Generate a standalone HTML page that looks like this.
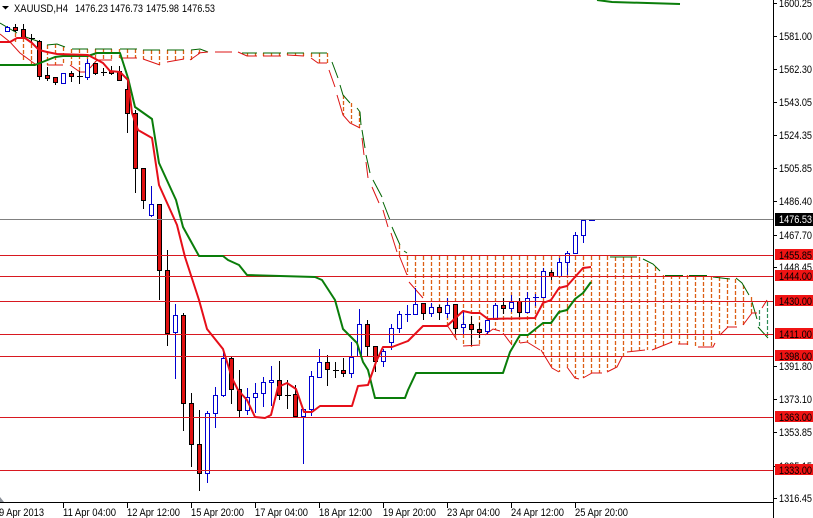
<!DOCTYPE html>
<html><head><meta charset="utf-8"><title>XAUUSD,H4</title>
<style>
html,body{margin:0;padding:0;background:#fff;width:813px;height:518px;overflow:hidden}
svg{display:block}
text{font-family:"Liberation Sans",sans-serif;font-size:11px;fill:#000}
</style></head><body>
<svg width="813" height="518" viewBox="0 0 813 518" xmlns="http://www.w3.org/2000/svg">
<rect width="813" height="518" fill="#fff"/>
<!-- cloud hatch -->
<path fill="none" stroke="#dc5f14" stroke-width="1.3" stroke-dasharray="4 2" d="M15.5 33V42M23.5 38V62M31.5 38V64M39.5 42V63M47.5 45V65M55.5 44V65M63.5 47V65M71.5 49V65M79.5 49V71M87.5 49V70M95.5 49V62M103.5 49V60M111.5 49V60M119.5 49V58M127.5 49V58M135.5 49V58M143.5 50V59M151.5 50V61M159.5 50V65M167.5 50V62M175.5 50V60M183.5 50V59M191.5 50V60M199.5 50V53M247.5 53V56M255.5 53V56M263.5 53V56M271.5 53V56M279.5 53V56M287.5 53V55M295.5 53V56M303.5 53V56M311.5 53V58M319.5 53V63M327.5 53V63M343.5 95V115M351.5 103V123M359.5 112V128M399.5 245V255M407.5 256V275M415.5 256V287M423.5 256V298M431.5 256V307M439.5 256V316M447.5 256V325M455.5 256V338M463.5 256V346M471.5 256V347M479.5 256V346M487.5 256V332M495.5 256V330M503.5 256V334M511.5 256V345M519.5 256V343M527.5 256V342M535.5 256V346M543.5 256V354M551.5 256V367M559.5 256V372M567.5 256V367M575.5 256V378M583.5 256V378M591.5 256V373M599.5 256V373M607.5 256V371M615.5 257V368M623.5 257V357M631.5 257V352M639.5 257V350M647.5 263V350M655.5 267V350M663.5 275V347M671.5 275V343M679.5 275V344M687.5 275V345M695.5 276V347M703.5 276V347M711.5 276V347M719.5 277V335M727.5 278V327M735.5 279V327M743.5 285V325M751.5 297V313"/>
<path fill="none" stroke="#2e8b57" stroke-width="1.2" stroke-dasharray="4 2" d="M759.5 310V327M767.5 302V338"/>
<!-- cloud contours -->
<path fill="none" stroke="#006400" stroke-width="1" d="M0 23L17 33M23 36L40 42M47 45L57 44L65 47M72 49H88M95 49H112M120 49H137M143 50H160M167 50H184M191 50L200 49L208 52M215 52H232M242 53H257M263 53H281M287 53H304M311 53H327M332 62L338 78M340 85L343 95L350 103M357 108L360 112L361 125M362 130L365 148M366 155L370 173M373 180L382 197M383 202L390 220M392 227L400 245M404 251L407 253M610 257H637M643 259L653 264L660 271M665 275.5H683M689 275.5H707M713 277L730 279M736 278L742 283L749 295M752 302L757 319M758 327L768 338"/>
<path fill="none" stroke="#dc1414" stroke-width="1" d="M0 34L10 42L20 53L35 64H40M47 65H63M70 65L80 72L87 72M90 68L97 60H112M120 58H137M143 59L160 65M167 62L184 59M190 60L200 53M198 53L208 52M215 52H232M238 52L247 56H257M263 56H281M287 55L304 56M311 58L318 63H327M329 70L335 87M337 95L343 115L350 123L360 128M362 138L364 155M366 162L368 178M372 187L379 203M383 210L388 227M391 233L397 252M399 255L407 275M409 282L423 298M447 325L457 340M463 346L480 345M485 335L493 329L500 331M503 333L512 345M520 343L527 342L540 350M541 350L552 368L559 372M567 367L575 378L579 379M583 378L592 373L602 373M607 372L617 367L622 357M627 352L645 350M652 350L672 342M678 344H688M698 347H713L715 343M720 335L728 327H737M743 325L752 313H757M762 308L767 300"/>
<!-- candle wicks -->
<path fill="none" stroke="#000" stroke-width="1" d="M15.5 24V32M23.5 24V39M39.5 40V80M47.5 67V81M55.5 77V85M71.5 71V82M95.5 63V75M111.5 66V75M119.5 66V80M127.5 80V133M135.5 110V193M143.5 168V209M159.5 204V300M167.5 250V346M183.5 313V431M191.5 393V467M199.5 410V491M231.5 357V404M239.5 370V418M279.5 361V400M295.5 385V416M327.5 355V386M343.5 358V377M367.5 320V357M375.5 346V372M423.5 303V320M439.5 305V320M455.5 304V334M471.5 316V345M479.5 323V338M503.5 298V314M519.5 298V317M551.5 270V280M31.5 34V43M29 38.5H35M79.5 71V84M77 76.5H83M103.5 68V76M101 72.5H107M287.5 380V409M285 395.5H291M335.5 362V378M333 370.5H339"/>
<path fill="none" stroke="#0000d0" stroke-width="1" d="M7.5 26V32M63.5 73V83M87.5 59V80M151.5 186V217M175.5 304V379M207.5 411V483M215.5 387V428M223.5 349V397M247.5 388V415M255.5 383V413M263.5 377V407M271.5 366V406M303.5 409V464M311.5 371V416M319.5 349V378M351.5 342V378M359.5 309V356M383.5 349V367M391.5 324V350M399.5 311V333M415.5 288V314M431.5 303V317M447.5 298V318M463.5 312V334M487.5 320V334M495.5 303V320M511.5 295V312M527.5 292V313M543.5 268V297M559.5 258V276M567.5 251V275M575.5 232V253M583.5 219V243M407.5 305V322M405 314.5H411M535.5 294V306M533 297.5H539M589 220.5H595"/>
<!-- bear bodies -->
<path fill="#e01010" stroke="#000" stroke-width="1" d="M13.5 27.5h4v3h-4zM21.5 29.5h4v9h-4zM37.5 41.5h4v35h-4zM45.5 75.5h4v3h-4zM53.5 77.5h4v5h-4zM69.5 73.5h4v3h-4zM93.5 63.5h4v10h-4zM109.5 71.5h4v2h-4zM117.5 71.5h4v9h-4zM125.5 89.5h4v24h-4zM133.5 113.5h4v55h-4zM141.5 168.5h4v32h-4zM157.5 204.5h4v66h-4zM165.5 270.5h4v63h-4zM181.5 315.5h4v88h-4zM189.5 403.5h4v41h-4zM197.5 444.5h4v29h-4zM229.5 358.5h4v31h-4zM237.5 389.5h4v21h-4zM277.5 380.5h4v15h-4zM293.5 394.5h4v22h-4zM325.5 362.5h4v7h-4zM341.5 370.5h4v3h-4zM365.5 324.5h4v22h-4zM373.5 346.5h4v15h-4zM421.5 303.5h4v10h-4zM437.5 307.5h4v5h-4zM453.5 304.5h4v24h-4zM469.5 324.5h4v5h-4zM477.5 329.5h4v3h-4zM501.5 305.5h4v3h-4zM517.5 301.5h4v11h-4zM549.5 272.5h4v4h-4z"/>
<!-- bull bodies -->
<path fill="#fff" stroke="#0000d0" stroke-width="1" d="M5.5 27.5h4v4h-4zM61.5 73.5h4v10h-4zM85.5 63.5h4v14h-4zM149.5 204.5h4v11h-4zM173.5 315.5h4v17h-4zM205.5 413.5h4v60h-4zM213.5 395.5h4v18h-4zM221.5 358.5h4v37h-4zM245.5 397.5h4v13h-4zM253.5 393.5h4v4h-4zM261.5 382.5h4v11h-4zM269.5 380.5h4v2h-4zM301.5 409.5h4v7h-4zM309.5 376.5h4v33h-4zM317.5 362.5h4v15h-4zM349.5 357.5h4v16h-4zM357.5 324.5h4v32h-4zM381.5 351.5h4v10h-4zM389.5 328.5h4v14h-4zM397.5 314.5h4v14h-4zM413.5 304.5h4v10h-4zM429.5 307.5h4v6h-4zM445.5 305.5h4v8h-4zM461.5 324.5h4v3h-4zM485.5 320.5h4v11h-4zM493.5 305.5h4v14h-4zM509.5 302.5h4v6h-4zM525.5 298.5h4v14h-4zM541.5 271.5h4v26h-4zM557.5 262.5h4v14h-4zM565.5 253.5h4v9h-4zM573.5 235.5h4v18h-4zM581.5 220.5h4v15h-4z"/>
<!-- horizontal levels -->
<path fill="none" stroke="#808080" stroke-width="1" d="M0 219.5H773"/>
<path fill="none" stroke="#d81820" stroke-width="1" d="M0 255.5H773M0 276.5H773M0 301.5H773M0 334.5H773M0 356.5H773M0 417.5H773M0 470.5H773"/>
<!-- Kijun -->
<path fill="none" stroke="#0a7d0a" stroke-width="2" stroke-linejoin="round" d="M0 65L35 65L55 57L63 56L88 56L97 53L120 53L128 78L135 107L152 119L159 163L176 200L183 227L199 256L223 256L228 260L239 265L247 275L315 277L322 280L335 300L343 329L357 343L363 362L368 370L375 398L405 398L408 390L416 373L503 373L510 352L520 335L528 335L543 323L551 323L559 312L567 310L575 299L583 293L591 282"/>
<path fill="none" stroke="#0a7d0a" stroke-width="2" d="M597 0L612 2L680 4"/>
<!-- Tenkan -->
<path fill="none" stroke="#e60f19" stroke-width="2" stroke-linejoin="round" d="M0 42L10 42L17 38L25 38L32 43L39 50L47 52L57 54L88 55L103 63L110 71L120 72L128 80L132 113L138 130L152 138L159 185L177 225L185 257L199 300L207 329L223 349L232 378L238 390L247 400L255 417L265 418L271 415L278 387L287 383L296 389L304 412L312 412L320 406L352 406L358 386L368 385L376 362L383 347L392 347L408 341L423 326L447 326L463 311L472 313L480 313L488 319L535 318L543 303L551 300L559 288L567 286L583 268L591 267"/>
<!-- axes -->
<path fill="none" stroke="#000" stroke-width="1" d="M773.5 0V518M0 502.5H774M63.5 503V508M127.5 503V508M191.5 503V508M255.5 503V508M319.5 503V508M383.5 503V508M447.5 503V508M511.5 503V508M575.5 503V508M773 3.5H777M773 36.5H777M773 69.5H777M773 102.5H777M773 135.5H777M773 168.5H777M773 201.5H777M773 235.5H777M773 267.5H777M773 366.5H777M773 399.5H777M773 432.5H777M773 466.5H777M773 498.5H777"/>
<polygon points="0,497 4,502 0,502" fill="#8a8f98"/>
<!-- header -->
<polygon points="2,6 9,6 5.5,9.5" fill="#000"/>
<text x="14" y="12" textLength="54" lengthAdjust="spacingAndGlyphs">XAUUSD,H4</text>
<text x="75" y="12" textLength="33" lengthAdjust="spacingAndGlyphs">1476.23</text>
<text x="110" y="12" textLength="33" lengthAdjust="spacingAndGlyphs">1476.73</text>
<text x="146" y="12" textLength="33" lengthAdjust="spacingAndGlyphs">1475.98</text>
<text x="182" y="12" textLength="33" lengthAdjust="spacingAndGlyphs">1476.53</text>
<!-- price labels -->
<g>
<rect x="775" y="213" width="38" height="13" fill="#000"/>
<text x="779" y="7" textLength="33" lengthAdjust="spacingAndGlyphs">1600.25</text>
<text x="779" y="40" textLength="33" lengthAdjust="spacingAndGlyphs">1581.00</text>
<text x="779" y="73" textLength="33" lengthAdjust="spacingAndGlyphs">1562.30</text>
<text x="779" y="106" textLength="33" lengthAdjust="spacingAndGlyphs">1543.05</text>
<text x="779" y="139" textLength="33" lengthAdjust="spacingAndGlyphs">1524.35</text>
<text x="779" y="172" textLength="33" lengthAdjust="spacingAndGlyphs">1505.85</text>
<text x="779" y="205" textLength="33" lengthAdjust="spacingAndGlyphs">1486.40</text>
<text x="779" y="223" textLength="33" lengthAdjust="spacingAndGlyphs" style="fill:#fff">1476.53</text>
<text x="779" y="239" textLength="33" lengthAdjust="spacingAndGlyphs">1467.70</text>
<text x="779" y="271" textLength="33" lengthAdjust="spacingAndGlyphs">1448.45</text>
<rect x="775" y="249" width="38" height="11" fill="#f01414"/>
<text x="779" y="259" textLength="33" lengthAdjust="spacingAndGlyphs">1455.85</text>
<rect x="775" y="270" width="38" height="11" fill="#f01414"/>
<text x="779" y="280" textLength="33" lengthAdjust="spacingAndGlyphs">1444.00</text>
<rect x="775" y="295" width="38" height="11" fill="#f01414"/>
<text x="779" y="305" textLength="33" lengthAdjust="spacingAndGlyphs">1430.00</text>
<rect x="775" y="328" width="38" height="11" fill="#f01414"/>
<text x="779" y="338" textLength="33" lengthAdjust="spacingAndGlyphs">1411.00</text>
<rect x="775" y="350" width="38" height="11" fill="#f01414"/>
<text x="779" y="360" textLength="33" lengthAdjust="spacingAndGlyphs">1398.00</text>
<text x="779" y="370" textLength="33" lengthAdjust="spacingAndGlyphs">1391.80</text>
<text x="779" y="403" textLength="33" lengthAdjust="spacingAndGlyphs">1373.10</text>
<rect x="775" y="411" width="38" height="11" fill="#f01414"/>
<text x="779" y="421" textLength="33" lengthAdjust="spacingAndGlyphs">1363.00</text>
<text x="779" y="436" textLength="33" lengthAdjust="spacingAndGlyphs">1353.85</text>
<text x="779" y="470" textLength="33" lengthAdjust="spacingAndGlyphs">1335.15</text>
<rect x="775" y="464" width="38" height="11" fill="#f01414"/>
<text x="779" y="474" textLength="33" lengthAdjust="spacingAndGlyphs">1333.00</text>
<text x="779" y="502" textLength="33" lengthAdjust="spacingAndGlyphs">1316.45</text>
</g>
<!-- time labels -->
<g>
<text x="-1" y="516" textLength="45" lengthAdjust="spacingAndGlyphs">9 Apr 2013</text>
<text x="63" y="516" textLength="53" lengthAdjust="spacingAndGlyphs">11 Apr 04:00</text>
<text x="127" y="516" textLength="53" lengthAdjust="spacingAndGlyphs">12 Apr 12:00</text>
<text x="191" y="516" textLength="53" lengthAdjust="spacingAndGlyphs">15 Apr 20:00</text>
<text x="255" y="516" textLength="53" lengthAdjust="spacingAndGlyphs">17 Apr 04:00</text>
<text x="319" y="516" textLength="53" lengthAdjust="spacingAndGlyphs">18 Apr 12:00</text>
<text x="383" y="516" textLength="53" lengthAdjust="spacingAndGlyphs">19 Apr 20:00</text>
<text x="447" y="516" textLength="53" lengthAdjust="spacingAndGlyphs">23 Apr 04:00</text>
<text x="511" y="516" textLength="53" lengthAdjust="spacingAndGlyphs">24 Apr 12:00</text>
<text x="575" y="516" textLength="53" lengthAdjust="spacingAndGlyphs">25 Apr 20:00</text>
</g>
</svg>
</body></html>
